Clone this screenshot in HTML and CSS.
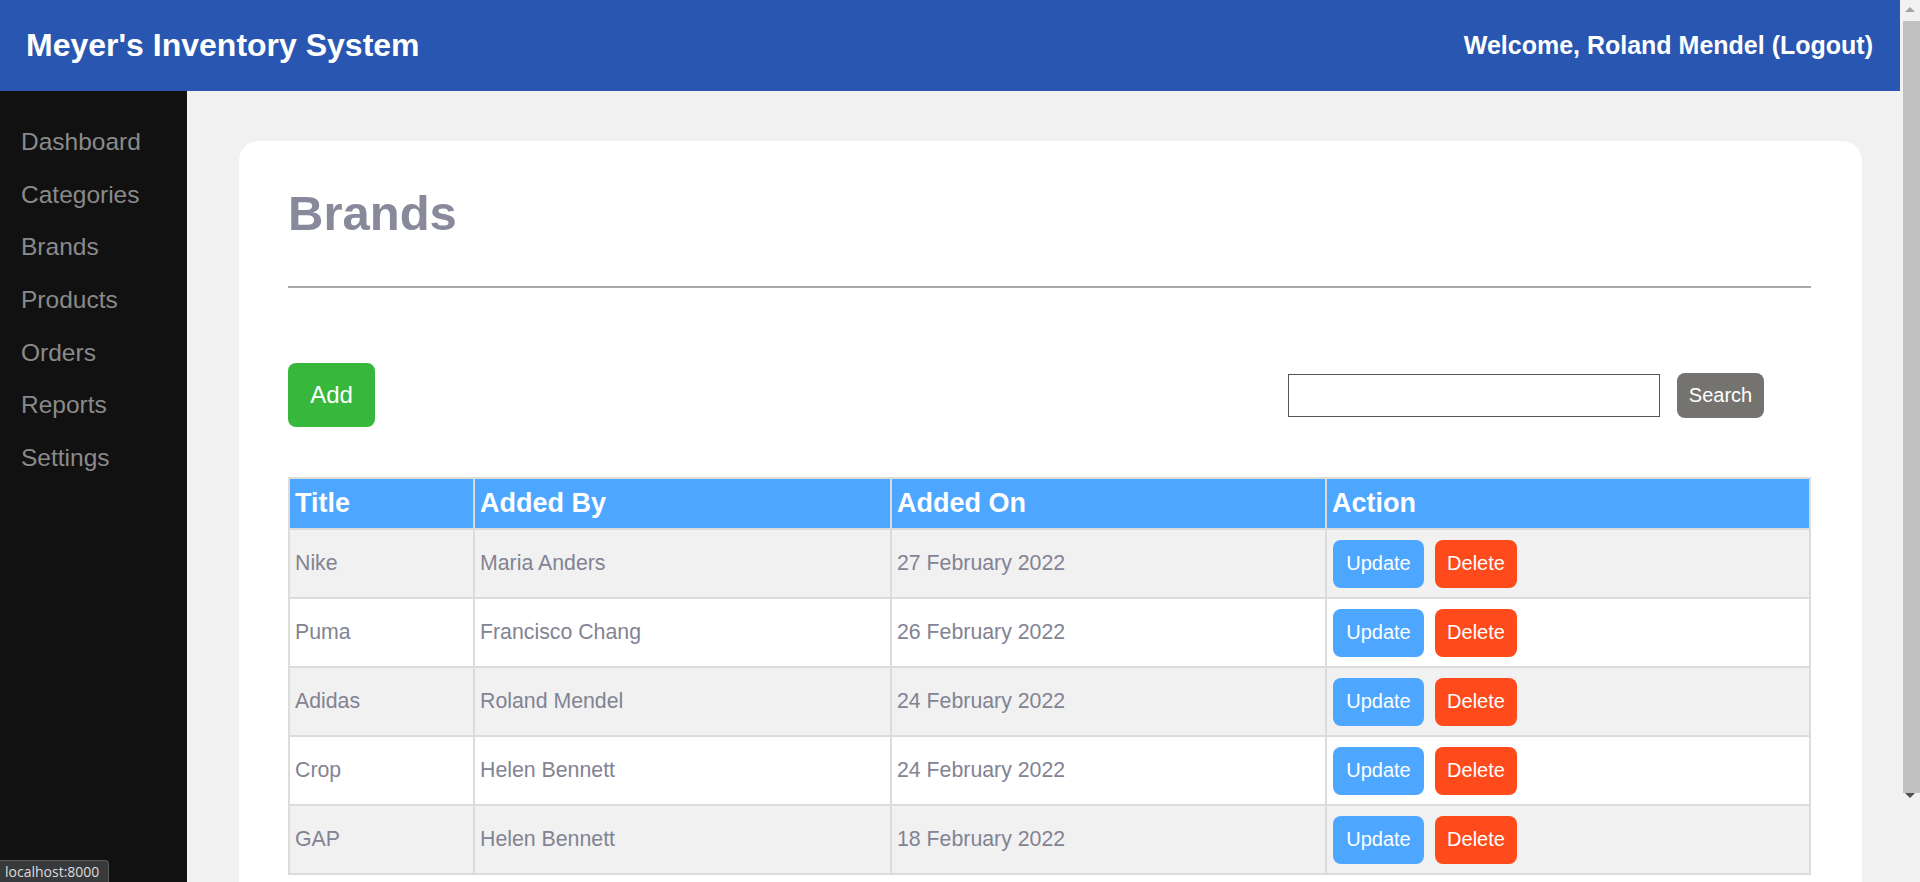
FILE: index.html
```html
<!DOCTYPE html>
<html lang="en">
<head>
<meta charset="utf-8">
<title>Brands - Meyer's Inventory System</title>
<link rel="stylesheet" href="styles.css">
</head>
<body>
<div class="page">
  <header class="topbar">
    <h1 class="app-title">Meyer's Inventory System</h1>
    <div class="welcome">Welcome, Roland Mendel (Logout)</div>
  </header>
  <div class="layout">
    <nav class="sidebar">
      <ul class="nav-list">
        <li><a class="nav-link" href="#">Dashboard</a></li>
        <li><a class="nav-link" href="#">Categories</a></li>
        <li><a class="nav-link" href="#">Brands</a></li>
        <li><a class="nav-link" href="#">Products</a></li>
        <li><a class="nav-link" href="#">Orders</a></li>
        <li><a class="nav-link" href="#">Reports</a></li>
        <li><a class="nav-link" href="#">Settings</a></li>
      </ul>
    </nav>
    <main class="main">
      <section class="card">
        <h2 class="page-title">Brands</h2>
        <hr class="divider">
        <div class="toolbar">
          <button class="btn btn-add">Add</button>
          <div class="search">
            <input class="search-input" type="text">
            <button class="btn btn-search">Search</button>
          </div>
        </div>
        <table class="data-table">
          <colgroup>
            <col class="col-title">
            <col class="col-by">
            <col class="col-on">
            <col class="col-action">
          </colgroup>
          <thead>
            <tr><th>Title</th><th>Added By</th><th>Added On</th><th>Action</th></tr>
          </thead>
          <tbody>
            <tr><td>Nike</td><td>Maria Anders</td><td>27 February 2022</td><td class="actions"><button class="btn btn-update">Update</button><button class="btn btn-delete">Delete</button></td></tr>
            <tr><td>Puma</td><td>Francisco Chang</td><td>26 February 2022</td><td class="actions"><button class="btn btn-update">Update</button><button class="btn btn-delete">Delete</button></td></tr>
            <tr><td>Adidas</td><td>Roland Mendel</td><td>24 February 2022</td><td class="actions"><button class="btn btn-update">Update</button><button class="btn btn-delete">Delete</button></td></tr>
            <tr><td>Crop</td><td>Helen Bennett</td><td>24 February 2022</td><td class="actions"><button class="btn btn-update">Update</button><button class="btn btn-delete">Delete</button></td></tr>
            <tr><td>GAP</td><td>Helen Bennett</td><td>18 February 2022</td><td class="actions"><button class="btn btn-update">Update</button><button class="btn btn-delete">Delete</button></td></tr>
          </tbody>
        </table>
      </section>
    </main>
  </div>
</div>
<div class="scrollbar" aria-hidden="true">
  <div class="sb-arrow sb-up"></div>
  <div class="sb-thumb"></div>
  <div class="sb-arrow sb-down"></div>
</div>
<div class="status-bar">localhost:8000</div>
</body>
</html>
```

FILE: styles.css
```css
html, body {
  margin: 0;
  padding: 0;
}
body {
  font-family: "Liberation Sans", Arial, sans-serif;
  background: #f1f1f1;
}
.page {
  margin-right: 20px;
}
.topbar {
  height: 91px;
  background: #2956b0;
  color: #fff;
  display: flex;
  align-items: center;
  justify-content: space-between;
  padding: 0 27px 0 26px;
  box-sizing: border-box;
}
.app-title {
  margin: 0;
  font-size: 32px;
  font-weight: bold;
}
.welcome {
  font-size: 25px;
  font-weight: bold;
}
.layout {
  display: flex;
  align-items: stretch;
}
.sidebar {
  width: 187px;
  flex: 0 0 187px;
  background: #111;
}
.nav-list {
  list-style: none;
  margin: 0;
  padding: 25px 0;
}
.nav-link {
  display: block;
  padding: 12.3px 21px;
  font-size: 24.5px;
  line-height: 28px;
  color: #8a8a8a;
  text-decoration: none;
}
.main {
  flex: 1;
  padding: 50px 38px 44px 52px;
  background: #f1f1f1;
}
.card {
  background: #fff;
  border-radius: 20px;
  padding: 44px 51px 56px 49px;
}
.page-title {
  margin: 0;
  font-size: 49px;
  font-weight: bold;
  color: #888a9b;
}
.divider {
  margin: 45px 0 0;
  border: 0;
  border-top: 2px solid #a8a8a8;
  height: 0;
}
.toolbar {
  display: flex;
  align-items: center;
  justify-content: space-between;
  margin-top: 75px;
}
.btn {
  border: 0;
  color: #fff;
  font-family: "Liberation Sans", Arial, sans-serif;
  border-radius: 8px;
  cursor: pointer;
}
.btn-add {
  background: #37b73b;
  font-size: 24px;
  width: 87px;
  height: 64px;
}
.search {
  display: flex;
  align-items: center;
  gap: 17px;
  margin-right: 47px;
}
.search-input {
  width: 372px;
  height: 43px;
  box-sizing: border-box;
  border: 1px solid #555;
  font-size: 18px;
  padding: 0 6px;
}
.btn-search {
  background: #757370;
  font-size: 20px;
  width: 87px;
  height: 45px;
}
.data-table {
  width: 100%;
  margin-top: 50px;
  border-collapse: collapse;
  border: 2px solid #dcdcdc;
}
.col-title { width: 185px; }
.col-by { width: 417px; }
.col-on { width: 435px; }
.data-table th {
  background: #4da6ff;
  color: #fff;
  font-size: 27px;
  font-weight: bold;
  text-align: left;
  padding: 9px 5px;
  border: 2px solid #dcdcdc;
  border-top: 0;
}
.data-table td {
  font-size: 21.3px;
  color: #828393;
  padding: 9.5px 5px;
  height: 48px;
  border: 2px solid #dcdcdc;
  vertical-align: middle;
}
.data-table tbody tr:nth-child(odd) {
  background: #f1f1f1;
}
.data-table tbody tr:nth-child(even) {
  background: #fff;
}
.data-table td.actions {
  padding-left: 6px;
}
.btn-update,
.btn-delete {
  height: 48px;
  font-size: 20px;
  vertical-align: middle;
}
.btn-update {
  background: #4da6ff;
  width: 91px;
  margin-right: 11px;
}
.btn-delete {
  background: #ff4a1c;
  width: 82px;
}
.scrollbar {
  position: fixed;
  top: 0;
  right: 0;
  width: 20px;
  height: 100vh;
  background: #f1f1f1;
  display: flex;
  flex-direction: column;
  align-items: center;
}
.sb-up {
  margin-top: 7px;
  width: 0;
  height: 0;
  border-left: 5px solid transparent;
  border-right: 5px solid transparent;
  border-bottom: 5px solid #a3a3a3;
}
.sb-down {
  margin-bottom: 7px;
  width: 0;
  height: 0;
  border-left: 5px solid transparent;
  border-right: 5px solid transparent;
  border-top: 5px solid #505050;
}
.sb-thumb {
  width: 17px;
  margin: 9px 0 0 3px;
  height: 772px;
  background: #c1c1c1;
}
.status-bar {
  position: fixed;
  left: 0;
  bottom: 0;
  background: #38393b;
  color: #dcdcdc;
  font-family: "Open Sans", "DejaVu Sans", sans-serif;
  font-size: 14px;
  line-height: 19px;
  padding: 1px 9px 1px 5px;
  border-top-right-radius: 4px;
  border: 1px solid #5a5a5a;
  border-left: 0;
  border-bottom: 0;
}
```
